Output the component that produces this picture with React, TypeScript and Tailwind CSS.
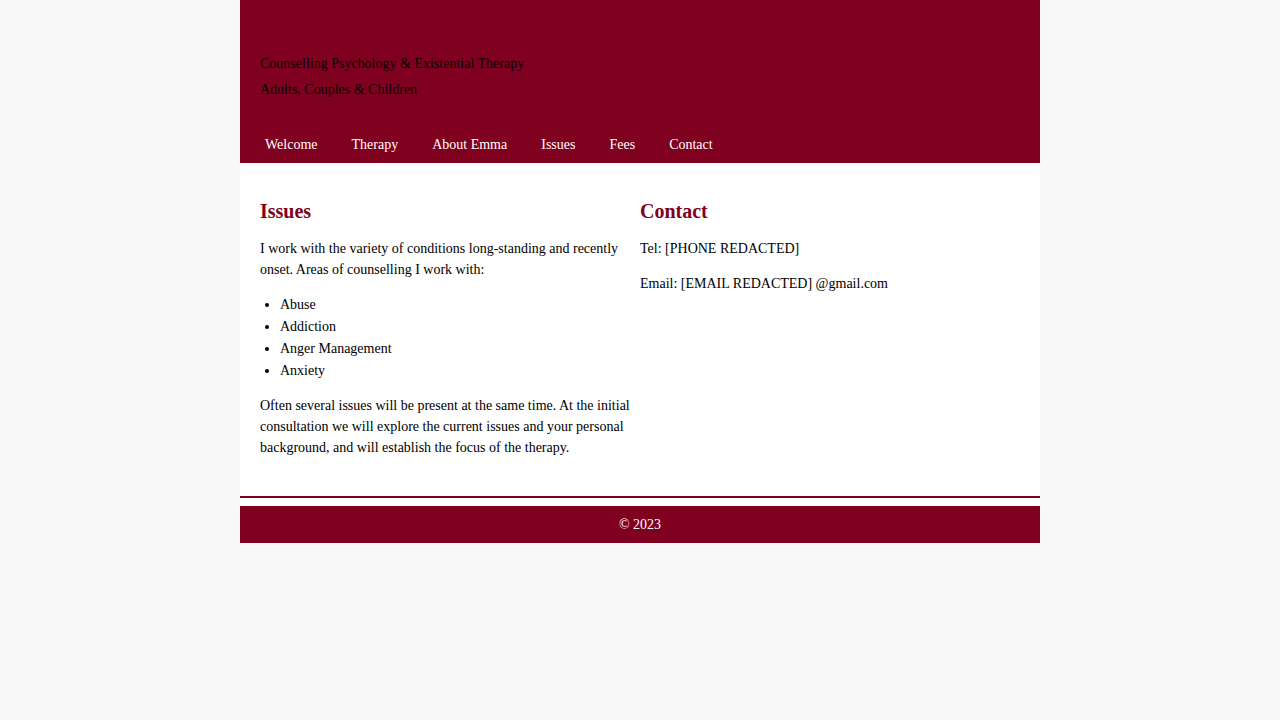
import React from 'react';

const navItems = ['Welcome', 'Therapy', 'About Emma', 'Issues', 'Fees', 'Contact'];
const issues = ['Abuse', 'Addiction', 'Anger Management', 'Anxiety'];

export default function App() {
    return (
        <div className="min-h-screen bg-[#f8f8f8] font-['Liberation_Serif',serif] text-black">
            <div className="w-[800px] mx-auto">
                {/* Header */}
                <header className="bg-[#800020] h-[163px] flex flex-col">
                    <div className="pt-[51px] px-5 text-[14px] leading-[26px] text-black">
                        <p>Counselling Psychology &amp; Existential Therapy</p>
                        <p>Adults, Couples &amp; Children</p>
                    </div>
                    <nav className="mt-auto flex pl-2 h-[38px] items-center">
                        {navItems.map(item => (
                            <a key={item} href="#" className="px-[17px] text-[14px] text-white">
                                {item}
                            </a>
                        ))}
                    </nav>
                </header>

                {/* Content */}
                <main className="bg-white px-5 pt-[35px] pb-[38px] flex border-b-2 border-[#800020]">
                    <section className="w-[380px] text-[14px] leading-[21px]">
                        <h2 className="text-[20px] leading-[26px] font-bold text-[#800020] mb-[14px]">Issues</h2>
                        <p>I work with the variety of conditions long-standing and recently onset. Areas of counselling I work with:</p>
                        <ul className="list-disc pl-5 mt-[14px] mb-[13px] leading-[22px]">
                            {issues.map(i => <li key={i}>{i}</li>)}
                        </ul>
                        <p>Often several issues will be present at the same time. At the initial consultation we will explore the current issues and your personal background, and will establish the focus of the therapy.</p>
                    </section>
                    <section className="w-[380px] text-[14px] leading-[21px]">
                        <h2 className="text-[20px] leading-[26px] font-bold text-[#800020] mb-[14px]">Contact</h2>
                        <p className="mb-[14px]">Tel: [PHONE REDACTED]</p>
                        <p>Email: [EMAIL REDACTED] @gmail.com</p>
                    </section>
                </main>
                <div className="bg-white h-2" />

                {/* Footer */}
                <footer className="bg-[#800020] h-[37px] flex items-center justify-center text-white text-[14px]">
                    © 2023
                </footer>
            </div>
        </div>
    );
}
